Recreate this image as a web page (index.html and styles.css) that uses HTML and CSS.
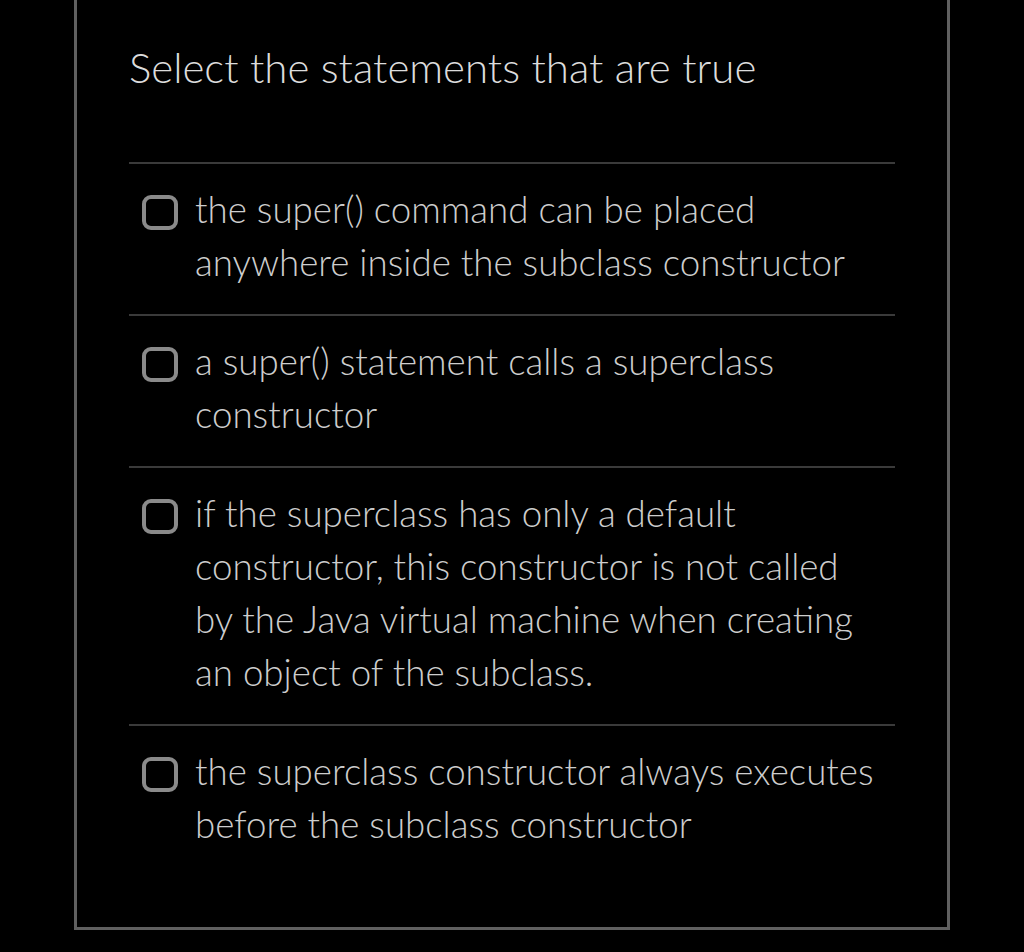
FILE: index.html
```html
<!DOCTYPE html>
<html>
<head>
<meta charset="utf-8">
<link rel="stylesheet" href="styles.css">
</head>
<body>
<div class="card">
  <h1 class="title">Select the statements that are true</h1>
  <ul class="options">
    <li class="option"><span class="box"></span><span class="label">the super() command can be placed anywhere inside the subclass constructor</span></li>
    <li class="option"><span class="box"></span><span class="label">a super() statement calls a superclass constructor</span></li>
    <li class="option"><span class="box"></span><span class="label">if the superclass has only a default constructor, this constructor is not called by the Java virtual machine when creating an object of the subclass.</span></li>
    <li class="option"><span class="box"></span><span class="label">the superclass constructor always executes before the subclass constructor</span></li>
  </ul>
</div>
</body>
</html>
```
FILE: styles.css
```css
html, body {
  margin: 0;
  padding: 0;
  background: #000;
}
body {
  width: 1024px;
  height: 952px;
  overflow: hidden;
  font-family: Lato, "Open Sans", sans-serif;
  font-weight: 300;
}
.card {
  margin: -10px 0 0 74px;
  width: 876px;
  height: 940px;
  border: 3px solid #606060;
  box-sizing: border-box;
  padding: 0 52px;
}
.title {
  margin: 0;
  padding-top: 50px;
  font-size: 42px;
  font-weight: 300;
  line-height: 48px;
  color: #dcdcdc;
}
.options {
  list-style: none;
  margin: 71px 0 0 0;
  padding: 0;
}
.option {
  display: flex;
  align-items: flex-start;
  border-top: 2px solid #3a3a3a;
  padding: 19px 14px 25px 13px;
}
.box {
  flex: none;
  width: 36px;
  height: 35px;
  box-sizing: border-box;
  border: 4px solid #8a8a8a;
  border-radius: 9px;
  margin-top: 12px;
  margin-right: 17px;
}
.label {
  font-size: 36.7px;
  line-height: 53px;
  color: #cdcdcd;
}
```
